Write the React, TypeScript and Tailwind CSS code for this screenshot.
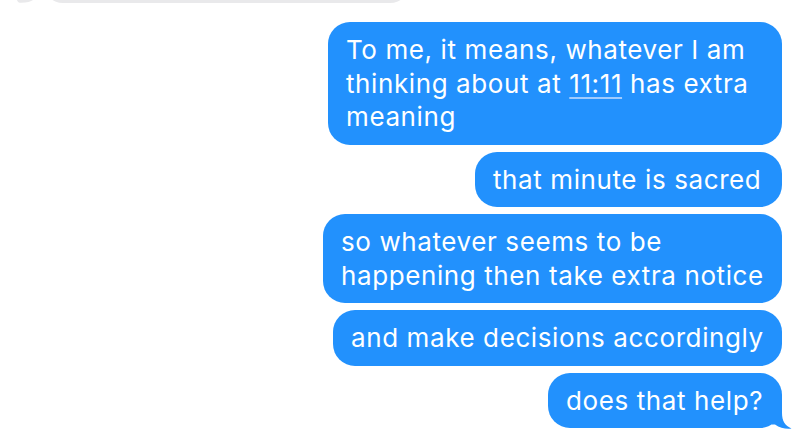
import React from "react";

const font = { fontFamily: "Inter, 'Noto Sans', sans-serif" };

function Bubble({ w, children, tail }: { w: string; children: React.ReactNode; tail?: boolean }) {
  return (
    <div className={`relative ${w} rounded-[22px] bg-[#2291fd] pl-[18px] pr-[19px] py-[11px] text-[26px] leading-[33.5px] tracking-[0.6px] text-white whitespace-nowrap`}>
      {children}
      {tail && (
        <svg className="absolute right-[-10px] bottom-[-1px]" width="20" height="26" viewBox="0 0 20 26">
          <path d="M0 0 L10 0 L10 10 C10 18 13 22.5 19.5 25.6 C14 26.4 8 25 3 21.5 L0 21.5 Z" fill="#2291fd" />
        </svg>
      )}
    </div>
  );
}

export default function App() {
  return (
    <div className="relative flex h-[440px] w-[804px] flex-col overflow-hidden bg-white antialiased" style={font}>
      <div className="relative flex h-[22px] flex-col">
        <div className="ml-[43px] mt-[-37px] h-[40px] w-[367px] shrink-0 rounded-[22px] bg-[#e9e9eb]" />
        <svg className="absolute left-[15px] top-0" width="30" height="4" viewBox="0 0 30 4">
          <path d="M2 0 L18 0 C16 1.5 12 2.6 6 2.8 C4 2.8 2.5 2 2 0 Z" fill="#e9e9eb" />
        </svg>
      </div>
      <div className="flex flex-col items-end gap-[7px] pr-[22px]">
        <Bubble w="w-[454px]">
          To me, it means, whatever I am
          <br />
          thinking about at{" "}
          <span className="underline decoration-[#9fcbff] decoration-[1.5px] underline-offset-[4px]">11:11</span> has extra
          <br />
          meaning
        </Bubble>
        <Bubble w="w-[307px]">that minute is sacred</Bubble>
        <Bubble w="w-[459px]">
          so whatever seems to be
          <br />
          happening then take extra notice
        </Bubble>
        <Bubble w="w-[449px]">and make decisions accordingly</Bubble>
        <Bubble w="w-[234px]" tail>
          does that help?
        </Bubble>
      </div>
    </div>
  );
}
